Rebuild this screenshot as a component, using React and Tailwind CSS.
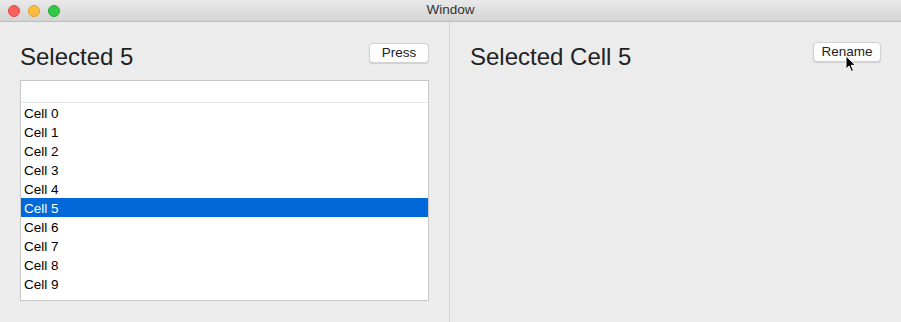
import React, { useState } from 'react';

const CELLS = Array.from({ length: 10 }, (_, i) => 'Cell ' + i);

// small mac style push button
function MacButton({ label, className }) {
  return (
    <button className={"h-[20px] rounded-[4px] bg-white border border-[#d0d0d0] shadow-[0_1px_1px_rgba(0,0,0,0.12)] text-[13.5px] text-[#222] leading-[18px] " + className}>
      {label}
    </button>
  );
}

function App() {
  const [selected, setSelected] = useState(5);

  return (
    <div className="relative w-[901px] h-[322px] bg-[#ececec] font-['Liberation_Sans',Arial,sans-serif] overflow-hidden flex flex-col">
      {/* title bar */}
      <div className="relative h-[22px] shrink-0 bg-gradient-to-b from-[#e9e9e9] to-[#d4d4d4] border-b border-[#bdbdbd] flex items-center justify-center">
        <div className="absolute left-[8px] top-[5px] flex gap-[8px]">
          <span className="w-[12px] h-[12px] rounded-full bg-[#fc605c] border border-[#de4a43]"></span>
          <span className="w-[12px] h-[12px] rounded-full bg-[#fdbc40] border border-[#dea235]"></span>
          <span className="w-[12px] h-[12px] rounded-full bg-[#34c84a] border border-[#27aa35]"></span>
        </div>
        <span className="text-[13.5px] text-[#333]">Window</span>
      </div>

      <div className="flex flex-1">
        {/* left pane */}
        <div className="w-[450px] border-r border-[#d3d3d3] pl-[20px] pr-[20px] pt-[20px]">
          <div className="flex justify-between items-start h-[28px]">
            <h1 className="text-[24px] leading-[28px] pt-[1px] text-[#222]">Selected {selected}</h1>
            <MacButton label="Press" className="w-[60px] mt-[1px]" />
          </div>
          <div className="mt-[10px] h-[221px] bg-white border border-[#c8c8c8]">
            <div className="h-[22px] border-b border-[#e6e6e6]"></div>
            {CELLS.map((c, i) => (
              <div
                key={c}
                onClick={() => setSelected(i)}
                className={i === selected
                  ? "h-[19px] leading-[19px] pt-[1px] pl-[3px] text-[13.5px] bg-[#0068d9] text-white"
                  : "h-[19px] leading-[19px] pt-[1px] pl-[3px] text-[13.5px] text-black"}
              >
                {c}
              </div>
            ))}
          </div>
        </div>

        {/* right pane */}
        <div className="flex-1 pl-[20px] pr-[20px] pt-[20px]">
          <div className="flex justify-between items-start h-[28px]">
            <h1 className="text-[24px] leading-[28px] pt-[1px] text-[#222]">Selected Cell {selected}</h1>
            <MacButton label="Rename" className="w-[68px]" />
          </div>
        </div>
      </div>

      {/* mouse pointer */}
      <svg className="absolute left-[845px] top-[55px]" width="12" height="18" viewBox="0 0 12 18">
        <path d="M1 1 L1 14 L4 11 L6.5 16.5 L8.5 15.6 L6.2 10.3 L10.5 10.3 Z" fill="#000" stroke="#fff" strokeWidth="1" strokeLinejoin="round" />
      </svg>
    </div>
  );
}

export default App;
